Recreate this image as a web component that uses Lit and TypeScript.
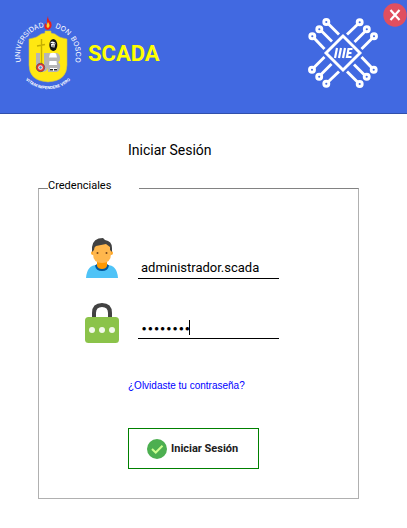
import { LitElement, html, css, svg } from "lit";
import { customElement, state } from "lit/decorators.js";

// One arm of the circuit emblem: three traces ending in round pads.
const arm = (turn: number) => svg`
  <g transform="rotate(${turn} 36 36)">
    <path d="M32 17.500L21 6.500" /><circle cx="19.300" cy="5" r="2.500" />
    <path d="M25 24.500L14 13.500" /><circle cx="12.300" cy="12.200" r="2.500" />
    <path d="M17.500 32L7 21" /><circle cx="5.300" cy="19.300" r="2.500" />
  </g>`;

@customElement("udb-crest")
export class UdbCrest extends LitElement {
  static styles = css`
    :host { display: block; }
    svg { display: block; overflow: visible; }
    .ring { font: 7px Inter, sans-serif; fill: #fff; }
    .motto { font: bold 4px Inter, sans-serif; fill: #fff; }
  `;
  render() {
    return html`<svg width="72" height="80" viewBox="12 13 72 80" role="img" aria-label="Universidad Don Bosco">
      <defs>
        <path id="left" d="M21 62A28 28 0 0 1 48 27" />
        <path id="right" d="M48 27A28 28 0 0 1 75 62" />
        <path id="low" d="M17 65A32 32 0 0 0 79 65" />
      </defs>
      <text class="ring"><textPath href="#left">UNIVERSIDAD</textPath></text>
      <text class="ring"><textPath href="#right" startOffset="7">DON</textPath></text>
      <text class="ring"><textPath href="#right" startOffset="26">BOSCO</textPath></text>
      <text class="motto"><textPath href="#low" startOffset="50%" text-anchor="middle">VITAM IMPENDERE VERO</textPath></text>
      <path d="M29 39Q37 38 41 34L45 33V31H51V33L55 34Q59 38 67 39V65Q67 81 48 82Q29 81 29 65Z" fill="#ffe811" stroke="#c9bd50" stroke-width=".6" />
      <path d="M48 16Q48 20 51 22Q53 28 48 30Q43 29 45 23L47 25Q46 20 48 16Z" fill="#e8201a" />
      <path d="M48 22Q51 26 48 28Q45 27 48 22Z" fill="#ffd52a" />
      <path d="M36 53h4v14h4V53h4v15q-1 4-7 4-5-1-5-5Z" fill="#b5b5b5" />
      <path d="M48 53h9q3 1 3 5t-2 4q3 2 2 6t-4 4h-8Z" fill="#b5b5b5" />
      <path d="M50 53.500q3-1.500 6 0l1 4h-8ZM49.500 61h7l.500 4h-8ZM50 68h7v3h-7Z" fill="#fff" />
      <path d="M50 69h3v1.500h-3ZM54 69h3v1.500h-3Z" fill="#222" />
      <ellipse cx="53.300" cy="45" rx="4" ry="6" fill="#111" />
      <path d="M50.500 42q3-1.500 5 1l-1 4.500-3-.500Z" fill="#fff" />
      <path d="M51 43.500h1.500M53.500 43.800h1.500M52 46h2.500" stroke="#111" stroke-width=".8" />
      <path d="M41.500 39V65M37 46L45 44.500" stroke="#c4ae00" stroke-width="1.400" />
      <circle cx="40.500" cy="67.500" r="4.200" fill="#e33431" stroke="#555" stroke-width=".7" />
      <circle cx="40.500" cy="67.500" r="2.300" fill="#eee" />
      <circle cx="40.500" cy="67.500" r="1.200" fill="#4b82c5" />
    </svg>`;
  }
}

@customElement("app-root")
export class AppRoot extends LitElement {
  @state() private user = "administrador.scada";
  @state() private secret = "scada123";

  static styles = css`
    :host { display: block; min-height: 100vh; background: #fff; color: #000; font-family: Roboto, sans-serif; }
    svg { display: block; }
    button { margin: 0; cursor: pointer; font-family: inherit; }
    .bar { display: flex; position: relative; box-sizing: border-box; min-height: 114px; padding: 13px 28px 0 12px; background: #4169e1; border-bottom: 1px solid #3150ab; }
    .name { margin: 26px 0 0 4px; font: bold 22px/30px Roboto, sans-serif; color: #ff0; }
    .emblem { margin: 4px 0 0 auto; }
    .trace { fill: none; stroke: #fff; stroke-width: 2.900; }
    .letters { stroke-width: 2.200; }
    .close { position: absolute; top: 3px; right: 0; padding: 0; border: 0; background: none; }
    .title { margin: 26px 0 0 128px; font: 14px/20px Roboto, sans-serif; }
    fieldset { margin: 20px 48px 0 38px; padding: 42px 46px 29px; border: 1px solid #b0b0b0; border-top-color: #828282; min-width: 0; }
    legend { margin-left: -37px; box-sizing: border-box; width: 91px; padding: 0 0 4px; font-size: 11px; line-height: 12px; }
    .row { display: flex; align-items: flex-end; gap: 19px; min-height: 41px; }
    .row svg { flex: none; }
    .first { align-items: stretch; margin-bottom: 23px; }
    .first .field { display: flex; align-items: flex-end; }
    .field { position: relative; flex: 0 1 141px; min-width: 0; }
    .second .field { padding-bottom: 4px; }
    input { display: block; box-sizing: border-box; width: 100%; height: 22px; margin: 0; padding: 0 3px; border: 0; border-bottom: 1px solid #000; outline: 0; background: none; color: #000; font: 13px Roboto, sans-serif; }
    .second input { font: 11px Inter, sans-serif; }
    .caret { position: absolute; left: 51px; bottom: 8px; width: 1px; height: 15px; background: #000; }
    .more { margin-left: 43px; }
    .forgot { display: block; margin-top: 37px; font: 10px/12px "Liberation Sans", sans-serif; color: #00f; text-decoration: none; white-space: nowrap; }
    .enter { display: flex; align-items: center; gap: 4px; box-sizing: border-box; min-width: 131px; height: 41px; margin-top: 36px; padding: 0 18px; border: 1px solid #008000; background: #fff; color: #202020; font: bold 11px/16px Roboto, sans-serif; white-space: nowrap; }
  `;

  render() {
    return html`
      <header class="bar">
        <udb-crest></udb-crest>
        <div class="name">SCADA</div>
        <svg class="emblem" width="72" height="72" viewBox="0 0 72 72" role="img" aria-label="IIIE">
          <g class="trace">
            ${[0, 90, 180, 270].map(arm)}
            <path d="M36 19L53 36L36 53L19 36Z" />
            <path class="letters" d="M30 31L28 41M34 31L32 41M38 31L36 41M45.500 32H41.500L40 40H44.500M41 36H44.500" />
          </g>
        </svg>
        <button class="close" type="button" aria-label="Cerrar">
          <svg width="24" height="24" viewBox="0 0 24 24">
            <circle cx="12" cy="12" r="11.700" fill="#e04f5f" />
            <path d="M7.500 7L16.500 17M16.500 7L7.500 17" stroke="#fff" stroke-width="2.200" />
          </svg>
        </button>
      </header>
      <main>
        <div class="title" role="heading" aria-level="1">Iniciar Sesión</div>
        <form @submit=${(e: Event) => e.preventDefault()}>
          <fieldset>
            <legend>Credenciales</legend>
            <div class="row first">
              <svg width="34" height="41" viewBox="0 0 34 41" aria-hidden="true">
                <path d="M1 40Q2 27 12 27H22Q32 27 33 40Z" fill="#4fc3f7" />
                <path d="M10 27.500Q11 33 17 33T24 27.500L22 26H12Z" fill="#01579b" />
                <path d="M12 22H22V28Q21 31 17 31T12 28Z" fill="#ff9800" />
                <circle cx="8" cy="15" r="2" fill="#ffa726" /><circle cx="26" cy="15" r="2" fill="#ffa726" />
                <path d="M8 9Q8 5 17 5T26 9V16Q26 25 17 25T8 16Z" fill="#ffb74d" />
                <path d="M7 14V9Q8 0 18 0L20 2Q27 3 27 10V14L25 12V9L21 6L11 8Q9 9 9 12Z" fill="#424242" />
                <circle cx="12.500" cy="15" r="1" fill="#784719" /><circle cx="21.500" cy="15" r="1" fill="#784719" />
              </svg>
              <div class="field">
                <input type="text" aria-label="Usuario" .value=${this.user}
                  @input=${(e: Event) => (this.user = (e.target as HTMLInputElement).value)} />
              </div>
            </div>
            <div class="row second">
              <svg width="34" height="40" viewBox="0 0 34 40" aria-hidden="true">
                <path d="M9 16V10Q9 2 17 2T25 10V16" fill="none" stroke="#424242" stroke-width="4" />
                <rect y="14" width="34" height="26" rx="3.500" fill="#8bc34a" />
                <g fill="#f1f8e9"><circle cx="7" cy="27" r="3" /><circle cx="17" cy="27" r="3" /><circle cx="27" cy="27" r="3" /></g>
              </svg>
              <div class="field">
                <input type="password" aria-label="Contraseña" .value=${this.secret}
                  @input=${(e: Event) => (this.secret = (e.target as HTMLInputElement).value)} />
                <span class="caret"></span>
              </div>
            </div>
            <div class="more">
              <a class="forgot" href="#recuperar">¿Olvidaste tu contraseña?</a>
              <button class="enter" type="submit">
                <svg width="20" height="20" viewBox="0 0 20 20" aria-hidden="true">
                  <circle cx="10" cy="10" r="10" fill="#4caf50" />
                  <path d="M5 10L8.700 13.500L15.500 6.700" fill="none" stroke="#ccff90" stroke-width="2" />
                </svg>
                Iniciar Sesión
              </button>
            </div>
          </fieldset>
        </form>
      </main>`;
  }
}
